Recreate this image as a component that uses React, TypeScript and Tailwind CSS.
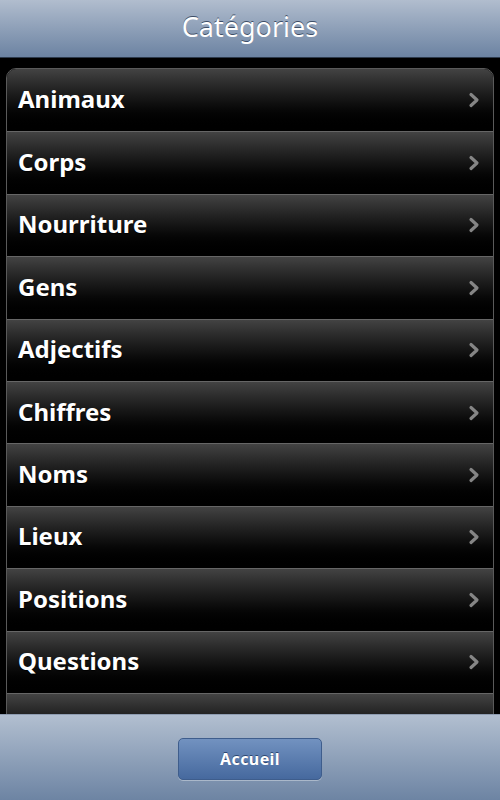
const categories = [
  "Animaux",
  "Corps",
  "Nourriture",
  "Gens",
  "Adjectifs",
  "Chiffres",
  "Noms",
  "Lieux",
  "Positions",
  "Questions",
  "Verbes",
];

function Chevron() {
  return (
    <svg width="14" height="16" viewBox="0 0 14 16" className="shrink-0">
      <path
        d="M4 2.5 L10 8 L4 13.5"
        fill="none"
        stroke="#858585"
        strokeWidth="3.2"
        strokeLinecap="round"
        strokeLinejoin="round"
      />
    </svg>
  );
}

export default function App() {
  return (
    <div
      className="h-[800px] w-[500px] flex flex-col bg-black overflow-hidden"
      style={{ fontFamily: '"Noto Sans", "DejaVu Sans", sans-serif' }}
    >
      <header className="h-[58px] shrink-0 flex items-center justify-center bg-gradient-to-b from-[#b1bdce] to-[#6c83a2] border-b border-[#2d3a4c]">
        <h1 className="text-[27px] text-white [text-shadow:0_-1px_0_#3e4e66] -mt-[3px]">
          Catégories
        </h1>
      </header>

      <div className="flex-1 overflow-hidden px-[6px] pt-[10px]">
        <ul className="rounded-[10px] border border-[#5a5a5a] overflow-hidden">
          {categories.map((c, i) => (
            <li
              key={c}
              className={`h-[62.4px] flex items-center justify-between pl-[11px] pr-[12px] bg-gradient-to-b from-[#434343] to-[#000000] ${
                i > 0 ? "border-t border-[#666666]" : ""
              }`}
            >
              <span className="text-[24px] font-bold text-white [text-shadow:0_1px_1px_#000] -mt-[2px]">
                {c}
              </span>
              <Chevron />
            </li>
          ))}
        </ul>
      </div>

      <footer className="h-[86px] shrink-0 flex items-center justify-center bg-gradient-to-b from-[#b2bfd0] to-[#6d84a3] border-t border-[#8e9cb1]">
        <button className="w-[144px] h-[42px] rounded-[5px] border border-[#3e5d8c] bg-gradient-to-b from-[#7292c0] to-[#46699e] text-white text-[16px] font-bold tracking-[0.4px] [text-shadow:0_-1px_0_#2c4670] shadow-[0_1px_0_rgba(255,255,255,0.35)] mt-[2px]">
          Accueil
        </button>
      </footer>
    </div>
  );
}
